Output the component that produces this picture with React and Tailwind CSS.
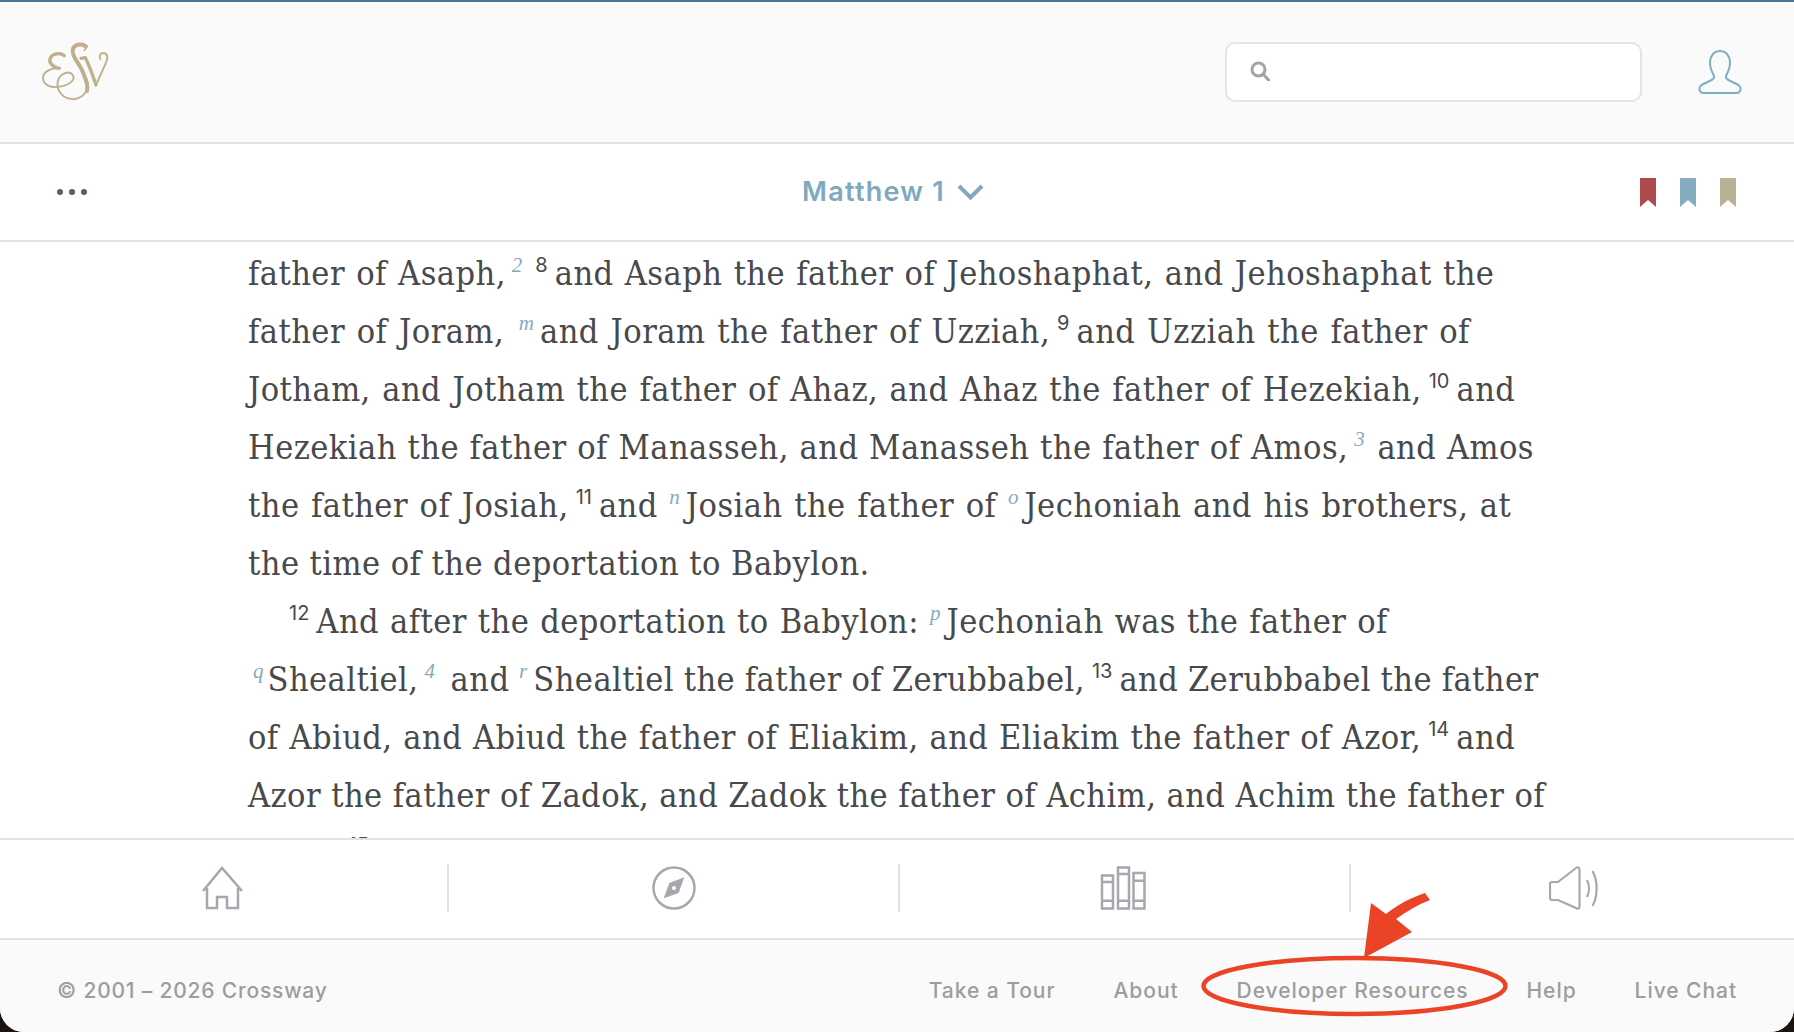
const Line = ({ children, className = "" }) => (
  <div className={"whitespace-nowrap " + className}>{children}</div>
);

// verse number, sits tight between the words around it
const V = ({ children, className = "mx-[7px]" }) => (
  <span className={"align-[13px] font-['Inter',sans-serif] text-[20px] font-normal leading-none tracking-normal " + className}>{children}</span>
);

const F = ({ children, className = "mr-[6px]" }) => (
  <span className={"align-[13px] font-['Liberation_Serif',serif] text-[21px] italic leading-none tracking-normal text-[#84abbf] " + className}>{children}</span>
);

const bookmarks = ["#ad4b4f", "#84abbf", "#b9b194"];
const links = ["Take a Tour", "About", "Developer Resources", "Help", "Live Chat"];

function Logo() {
  return (
    <svg viewBox="0 0 270 225" className="h-[75px] w-[90px]" fill="none" stroke="#bfb08d" strokeLinecap="round" strokeLinejoin="round">
      <path d="M100 62C88 52 62 54 57 72C53 88 72 98 85 100" strokeWidth="10" />
      <path d="M85 100C60 98 35 110 36 130C37 150 60 160 85 155C115 150 135 135 125 120C115 105 85 115 80 140C75 170 100 195 130 192C160 188 172 165 170 140" strokeWidth="5.500" />
      <path d="M165 34C150 24 128 28 125 45C122 65 145 85 155 110C165 135 172 150 168 168" strokeWidth="12" />
      <path d="M158 28C166 30 168 38 160 46" strokeWidth="5" />
      <path d="M150 70L163 68C172 85 185 120 195 150" strokeWidth="10" />
      <path d="M195 150L222 90C232 70 232 55 218 54C208 54 203 62 208 72" strokeWidth="5.500" />
    </svg>
  );
}

function Header() {
  return (
    <header className="flex h-[140px] items-center justify-between bg-[#fafafa] pl-[31px] pr-[52px]">
      <Logo />
      <div className="flex items-center gap-[56px]">
        <div className="flex h-[60px] w-[417px] items-center rounded-[10px] border-2 border-[#e1e4e8] bg-white pb-[2px] pl-[23px]">
          <svg viewBox="0 0 20 20" className="h-5 w-5" fill="none" stroke="#a2a4a6" strokeWidth="3">
            <circle cx="8.500" cy="8.500" r="6.500" />
            <path d="M13 13l6 6.500" strokeLinecap="round" />
          </svg>
        </div>
        <svg viewBox="0 0 44 44" className="h-[44px] w-[44px]" fill="none" stroke="#7fadc2" strokeWidth="2">
          <path d="M22 1c-6 0-10 5-10 12 0 5 2 9 3.500 12 1 2 .5 3.500-1 4.500L3.500 35c-2 1.500-2.500 4-1.500 6 .7 1.500 2 2 3.500 2h33c1.500 0 2.800-.5 3.500-2 1-2 .5-4.500-1.500-6l-11-5.500c-1.500-1-2-2.500-1-4.500C30 22 32 18 32 13c0-7-4-12-10-12z" strokeLinejoin="round" />
        </svg>
      </div>
    </header>
  );
}

function ChapterBar() {
  return (
    <nav className="flex h-[96px] items-center justify-between pl-[57px] pr-[58px]">
      <div className="flex w-[30px] justify-between">
        <span className="h-[6px] w-[6px] rounded-full bg-[#5b5f64]" />
        <span className="h-[6px] w-[6px] rounded-full bg-[#5b5f64]" />
        <span className="h-[6px] w-[6px] rounded-full bg-[#5b5f64]" />
      </div>
      <div className="flex items-center gap-[12px] pl-[59px] font-['Inter',sans-serif] text-[27px] font-semibold tracking-[1.25px] text-[#7fa9bf]">
        Matthew 1
        <svg viewBox="0 0 27 16" className="h-[16px] w-[27px]" fill="none" stroke="#7fa9bf" strokeWidth="4">
          <path d="M2 2l11.500 11.500L25 2" />
        </svg>
      </div>
      <div className="flex gap-[24px]">
        {bookmarks.map((c) => (
          <svg key={c} viewBox="0 0 16 29" className="h-[29px] w-[16px]" fill={c}>
            <path d="M0 0h16v29l-8-7-8 7z" />
          </svg>
        ))}
      </div>
    </nav>
  );
}

function Reading() {
  return (
    <main className="h-[596px] overflow-hidden pl-[248px] pt-[2px] font-['DejaVu_Serif_Condensed','DejaVu_Serif',serif] text-[34px] leading-[58px] tracking-[0.45px] text-[#47494b]">
      <Line className="[word-spacing:1.1px]">father of Asaph,<F className="mx-[6px]">2</F><V>8</V>and Asaph the father of Jehoshaphat, and Jehoshaphat the</Line>
      <Line className="[word-spacing:1.6px]">father of Joram, <F className="ml-[3px] mr-[6px]">m</F>and Joram the father of Uzziah,<V>9</V>and Uzziah the father of</Line>
      <Line className="[word-spacing:1.3px]">Jotham, and Jotham the father of Ahaz, and Ahaz the father of Hezekiah,<V>10</V>and</Line>
      <Line className="[word-spacing:0.5px]">Hezekiah the father of Manasseh, and Manasseh the father of Amos,<F className="ml-[6px] mr-[2px]">3</F> and Amos</Line>
      <Line className="[word-spacing:1.4px]">the father of Josiah,<V>11</V>and <F>n</F>Josiah the father of <F>o</F>Jechoniah and his brothers, at</Line>
      <Line>the time of the deportation to Babylon.</Line>
      <Line className="pl-[41px] [word-spacing:0.8px]"><V className="mr-[7px]">12</V>And after the deportation to Babylon: <F>p</F>Jechoniah was the father of</Line>
      <Line className="[word-spacing:-0.5px]"><F className="ml-[5px] mr-[4px]">q</F>Shealtiel,<F className="mx-[6px]">4</F> and <F>r</F>Shealtiel the father of Zerubbabel,<V>13</V>and Zerubbabel the father</Line>
      <Line className="[word-spacing:0.6px]">of Abiud, and Abiud the father of Eliakim, and Eliakim the father of Azor,<V>14</V>and</Line>
      <Line>Azor the father of Zadok, and Zadok the father of Achim, and Achim the father of</Line>
      <Line>Eliud,<V>15</V>and Eliud the father of Eleazar, and Eleazar the father of Matthan, and</Line>
    </main>
  );
}

const Divider = () => <span className="h-[48px] w-[2px] shrink-0 bg-[#dfe2e5]" />;

function IconBar() {
  const cls = "fill-none stroke-[#a5a8ac]";
  return (
    <div className="flex h-[102px] items-center border-y-2 border-[#dfe3e7] pb-[2px]">
      <div className="flex w-[447px] shrink-0 justify-center pr-[4px]">
        <svg viewBox="0 0 42 44" className={"h-[44px] w-[42px] " + cls} strokeWidth="2.500">
          <path d="M2 25L21 2l20 23M6 22v20h10V31h10v11h11V22" />
        </svg>
      </div>
      <Divider />
      <div className="flex w-[449px] shrink-0 justify-center">
        <svg viewBox="0 0 44 44" className={"h-[44px] w-[44px] " + cls} strokeWidth="2.500">
          <circle cx="22" cy="22" r="20.500" />
          <path d="M32.300 11.300L17.300 17l-5.600 15.300L26.700 27z" fill="#a5a8ac" stroke="none" />
          <circle cx="22" cy="22" r="2" fill="#fff" stroke="none" />
        </svg>
      </div>
      <Divider />
      <div className="flex w-[449px] shrink-0 justify-center pr-[3px]">
        <svg viewBox="0 0 46 44" className={"h-[44px] w-[46px] " + cls} strokeWidth="2.500">
          <path d="M2 9.500h11v33H2zM18 1.500h11v41H18zM33.500 7h11v35.500h-11zM2 16h11M2 34.700h11M18 8h11M18 34.700h11M33.500 14.700h11M33.500 34.700h11" />
        </svg>
      </div>
      <Divider />
      <div className="flex flex-1 justify-center pl-[3px]">
        <svg viewBox="0 0 50 44" className={"h-[44px] w-[50px] " + cls} strokeWidth="2.200">
          <path d="M3 16h6L27 2c2-1.500 3.500-.5 3.500 1.500v37c0 2-1.500 3-3.500 1.500L9 34H3c-1.500 0-2-1-2-2V18c0-1 .5-2 2-2z" />
          <path d="M38 14c2.500 5 2.500 12 0 17M43.500 5c5.500 10 5.500 25 0 35" />
        </svg>
      </div>
    </div>
  );
}

function Footer() {
  return (
    <footer className="flex h-[92px] items-center justify-between bg-[#fafafa] px-[57px] pt-[10px] font-['Inter',sans-serif] text-[21px] font-medium tracking-[0.95px] text-[#9a9da1]">
      <span className="tracking-[0.8px]">© 2001 – 2026 Crossway</span>
      <div className="flex gap-[58px]">
        {links.map((l) => (
          <span key={l}>{l}</span>
        ))}
      </div>
    </footer>
  );
}

export default function App() {
  return (
    <div className="relative h-[1032px] w-[1794px] overflow-hidden bg-[#1c1410]">
      <div className="h-full overflow-hidden rounded-b-[24px] border-t-2 border-[#4e7690] bg-white">
        <div className="border-b-2 border-[#dfe3e7]">
          <Header />
        </div>
        <div className="border-b-2 border-[#dfe3e7]">
          <ChapterBar />
        </div>
        <Reading />
        <IconBar />
        <Footer />
      </div>
      {/* red annotation drawn on top of the screenshot */}
      <svg viewBox="0 0 1794 1032" className="pointer-events-none absolute inset-0 h-full w-full" fill="none">
        <ellipse cx="1354.500" cy="986" rx="151" ry="28" stroke="#ea4326" strokeWidth="4.500" />
        <path d="M1364 958l7-55 15 11c11-9 24-16 39-21l5 7c-13 5-24 12-34 19l16 13z" fill="#ea4326" />
      </svg>
    </div>
  );
}
